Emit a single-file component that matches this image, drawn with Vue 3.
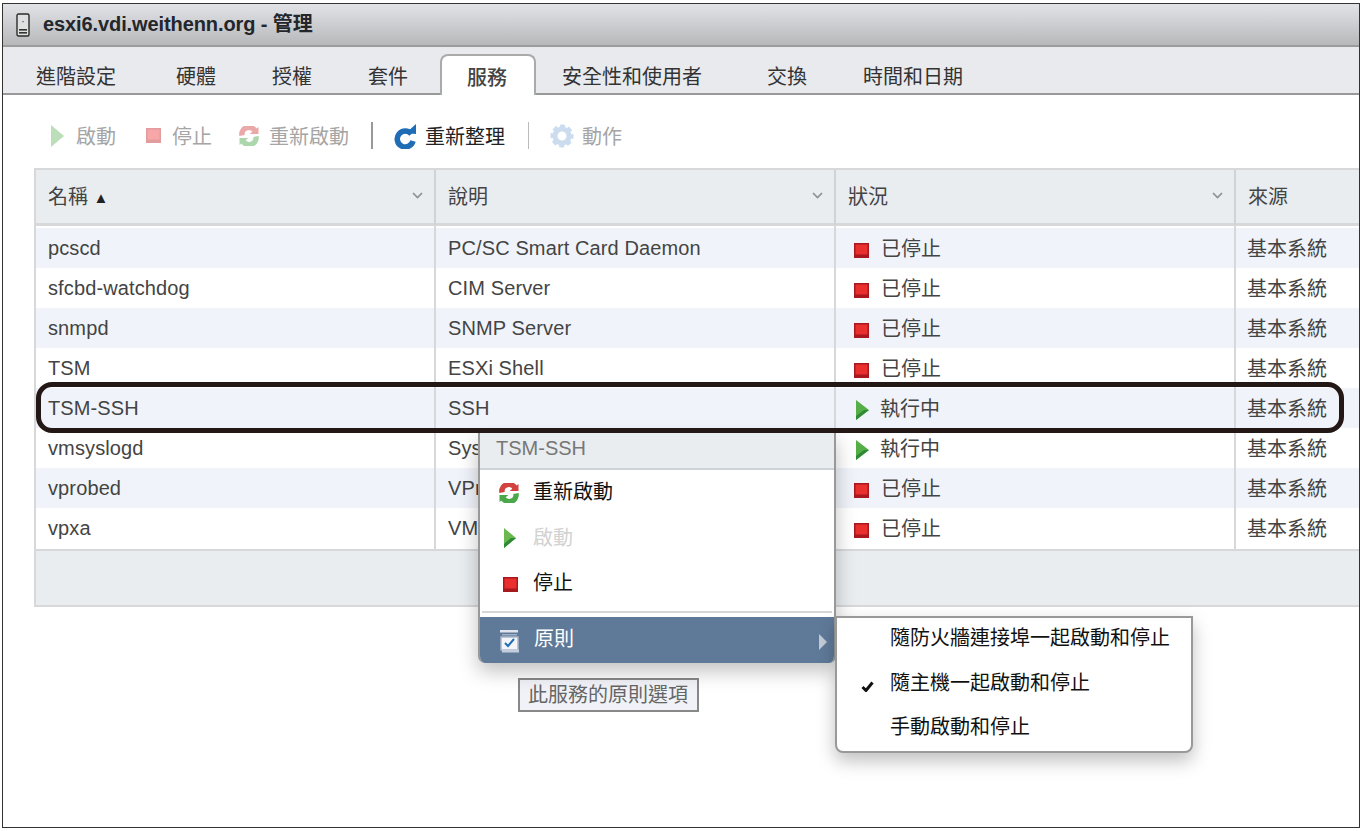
<script setup>
const tabs = [
  { t: '進階設定', ml: 33 },
  { t: '硬體', ml: 60 },
  { t: '授權', ml: 56 },
  { t: '套件', ml: 56 },
  { t: '服務', ml: 32, active: true },
  { t: '安全性和使用者', ml: 26 },
  { t: '交換', ml: 65 },
  { t: '時間和日期', ml: 56 }
]
const rows = [
  ['pcscd', 'PC/SC Smart Card Daemon', 'stop', '已停止'],
  ['sfcbd-watchdog', 'CIM Server', 'stop', '已停止'],
  ['snmpd', 'SNMP Server', 'stop', '已停止'],
  ['TSM', 'ESXi Shell', 'stop', '已停止'],
  ['TSM-SSH', 'SSH', 'run', '執行中'],
  ['vmsyslogd', 'Sys', 'run', '執行中'],
  ['vprobed', 'VPr', 'stop', '已停止'],
  ['vpxa', 'VM', 'stop', '已停止']
]
</script>

<template>
  <div class="frame">
    <div class="title">
      <svg class="srv" width="14" height="24" viewBox="0 0 14 24">
        <rect x="1" y="1" width="12" height="22" rx="1.5" fill="#dfe0e0" stroke="#2b2b2b" stroke-width="1.4" />
        <rect x="3" y="16" width="8" height="1.6" fill="#333" />
        <rect x="3" y="19" width="8" height="1.6" fill="#333" />
        <rect x="6.4" y="8" width="1.2" height="1.2" fill="#555" />
      </svg>
      <span>esxi6.vdi.weithenn.org - 管理</span>
    </div>

    <div class="tabs">
      <div
        v-for="tab in tabs"
        :key="tab.t"
        class="tab"
        :class="{ active: tab.active }"
        :style="{ marginLeft: tab.ml + 'px' }"
      >{{ tab.t }}</div>
    </div>

    <div class="toolbar">
      <div class="tool dim play-tool">
        <svg width="13" height="22" viewBox="0 0 13 22"><path d="M0 0 L13 11 L0 22 Z" fill="#6db765" /></svg>
        <span>啟動</span>
      </div>
      <div class="tool dim stop-tool">
        <svg width="15" height="15" viewBox="0 0 15 15"><rect width="15" height="15" fill="#c3252b" /><rect x="1.5" y="1.5" width="12" height="10" fill="#ee3e3e" /></svg>
        <span>停止</span>
      </div>
      <div class="tool dim restart-tool">
        <svg width="20" height="20" viewBox="0 0 20 20" fill="none">
          <path d="M3 9.5 A7 7 0 0 1 16.5 6" stroke="#d2423f" stroke-width="5.5" />
          <path d="M10.5 8 H19.5 V1 Z" fill="#d2423f" />
          <path d="M17 10.5 A7 7 0 0 1 3.5 14" stroke="#4aa84a" stroke-width="5.5" />
          <path d="M9.5 12 H0.5 V19 Z" fill="#4aa84a" />
        </svg>
        <span>重新啟動</span>
      </div>
      <i class="sep first"></i>
      <div class="tool refresh-tool">
        <svg width="23" height="26" viewBox="0 0 23 26" fill="none">
          <path d="M17.5 11 A8 8 0 1 0 19 18" stroke="#1f6db5" stroke-width="5.5" />
          <path d="M12 10 L22 1 V11 Z" fill="#1f6db5" />
        </svg>
        <span>重新整理</span>
      </div>
      <i class="sep second"></i>
      <div class="tool dim gear-tool">
        <svg width="26" height="26" viewBox="0 0 26 26" fill="none">
          <circle cx="13" cy="13" r="9" stroke="#8db2dc" stroke-width="5" stroke-dasharray="4.4 2.67" stroke-dashoffset="2" />
          <circle cx="13" cy="13" r="7" stroke="#8db2dc" stroke-width="5" />
        </svg>
        <span>動作</span>
      </div>
    </div>

    <div class="grid">
      <div class="head">
        <div class="hcell">名稱 <span class="sort">▲</span><svg class="chev" width="11" height="7" viewBox="0 0 11 7" fill="none"><path d="M1 1 L5.5 5.5 L10 1" stroke="#8a8f94" stroke-width="1.6" /></svg></div>
        <div class="hcell">說明<svg class="chev" width="11" height="7" viewBox="0 0 11 7" fill="none"><path d="M1 1 L5.5 5.5 L10 1" stroke="#8a8f94" stroke-width="1.6" /></svg></div>
        <div class="hcell">狀況<svg class="chev" width="11" height="7" viewBox="0 0 11 7" fill="none"><path d="M1 1 L5.5 5.5 L10 1" stroke="#8a8f94" stroke-width="1.6" /></svg></div>
        <div class="hcell last">來源</div>
      </div>
      <div class="body">
        <div v-for="(r, i) in rows" :key="r[0]" class="row" :class="{ odd: i % 2 === 0 }">
          <div class="cell">{{ r[0] }}</div>
          <div class="cell">{{ r[1] }}</div>
          <div class="cell status">
            <svg v-if="r[2] === 'stop'" width="15" height="15" viewBox="0 0 15 15"><rect width="15" height="15" fill="#a8181f" /><rect x="1.5" y="1.5" width="12" height="10" fill="#ea2f2f" /></svg>
            <svg v-else class="runi" width="13" height="20" viewBox="0 0 13 20"><path d="M0 0 L13 10 L0 20 Z" fill="#55ae46" /><path d="M0 20 L13 10 L8 10 L0 16 Z" fill="#2f8a35" /></svg>
            <span>{{ r[3] }}</span>
          </div>
          <div class="cell last">基本系統</div>
        </div>
      </div>
      <div class="foot"></div>
    </div>

    <div class="ring"></div>

    <div class="menu">
      <div class="mhead">TSM-SSH</div>
      <div class="mitem m-restart">
        <svg class="mi" width="20" height="20" viewBox="0 0 20 20" fill="none">
          <path d="M3 9.5 A7 7 0 0 1 16.5 6" stroke="#d2423f" stroke-width="5.5" />
          <path d="M10.5 8 H19.5 V1 Z" fill="#d2423f" />
          <path d="M17 10.5 A7 7 0 0 1 3.5 14" stroke="#4aa84a" stroke-width="5.5" />
          <path d="M9.5 12 H0.5 V19 Z" fill="#4aa84a" />
        </svg>
        <span>重新啟動</span>
      </div>
      <div class="mitem m-start">
        <svg class="mi" width="20" height="20" viewBox="0 0 20 20"><path d="M5 0 L17 10 L5 20 Z" fill="#6ab84f" /><path d="M5 20 L17 10 L12 10 L5 16 Z" fill="#2f8a35" /></svg>
        <span>啟動</span>
      </div>
      <div class="mitem m-stop">
        <svg class="mi" width="20" height="15" viewBox="0 0 20 15"><rect x="4" width="15" height="15" fill="#a8181f" /><rect x="5.5" y="1.5" width="12" height="10" fill="#ea2f2f" /></svg>
        <span>停止</span>
      </div>
      <div class="msep"></div>
      <div class="mitem selected">
        <svg class="mi" width="21" height="24" viewBox="0 0 21 24" fill="none">
          <rect x="2" y="8" width="17" height="13" fill="#f3f5f9" stroke="#a9b6cc" stroke-width="1.5" />
          <rect x="1" y="1" width="18" height="2.5" fill="#dfe4ee" />
          <rect x="3" y="5" width="15" height="1.5" fill="#9fb0c6" />
          <rect x="3" y="20.5" width="17" height="3" fill="#c3cddd" />
          <path d="M6 14 L9 17 L15 10" stroke="#1f6db5" stroke-width="2" />
        </svg>
        <span>原則</span>
        <svg class="arrow" width="8" height="16" viewBox="0 0 8 16"><path d="M0 0 L8 8 L0 16 Z" fill="#c3ccd6" /></svg>
      </div>
    </div>

    <div class="sub">
      <div class="sitem">隨防火牆連接埠一起啟動和停止</div>
      <div class="sitem">
        <svg class="check" width="13" height="11" viewBox="0 0 13 11" fill="none"><path d="M1.5 6 L5 9.5 L11.5 1.5" stroke="#111" stroke-width="3" /></svg>
        隨主機一起啟動和停止
      </div>
      <div class="sitem">手動啟動和停止</div>
    </div>

    <div class="tip">此服務的原則選項</div>
  </div>
</template>

<style>
html, body { background: #fff; }
</style>

<style scoped>
.frame {
  position: relative;
  box-sizing: border-box;
  width: 1358px;
  height: 825px;
  margin: 3px 3px 0 2px;
  border: 1px solid #333;
  overflow: hidden;
  background: #fff;
  font-family: "Liberation Sans", "Noto Sans CJK TC", sans-serif;
  font-size: 20px;
  color: #333;
}
.title {
  box-sizing: border-box;
  height: 43px;
  padding: 0 0 5px 13px;
  display: flex;
  align-items: center;
  gap: 13px;
  background: linear-gradient(#e1e3e7, #b6b8ba);
  border-bottom: 2px solid #9a9c9e;
  color: #23262b;
  font-weight: 700;
  font-size: 20px;
  letter-spacing: -.1px;
}
.srv { flex: none; margin-top: 5px; }
.tabs {
  box-sizing: border-box;
  height: 48px;
  display: flex;
  align-items: flex-end;
  background: #e8eaee;
  border-bottom: 2px solid #999;
}
.tab {
  height: 38px;
  line-height: 44px;
  color: #333;
  white-space: nowrap;
}
.tab.active {
  box-sizing: border-box;
  height: 41px;
  line-height: 44px;
  padding: 0 27px 0 25px;
  margin-bottom: -2px;
  background: #fff;
  border: 2px solid #aaa;
  border-bottom: 0;
  border-radius: 8px 8px 0 0;
  color: #444;
  font-weight: 500;
}
.toolbar {
  height: 73px;
  display: flex;
  align-items: center;
  padding-left: 48px;
  padding-top: 8px;
  box-sizing: border-box;
}
.tool {
  display: flex;
  align-items: center;
  color: #222;
  white-space: nowrap;
}
.tool.dim { color: #a5a5a5; }
.tool.dim svg { opacity: .45; }
.play-tool { gap: 12px; }
.stop-tool { gap: 11px; margin-left: 30px; }
.restart-tool { gap: 10px; margin-left: 27px; }
.refresh-tool { gap: 8px; margin-left: 21px; }
.gear-tool { gap: 7px; margin-left: 20px; }
.sep { flex: none; width: 2px; height: 27px; background: #999; }
.sep.first { margin-left: 22px; }
.sep.second { width: 1px; margin-left: 23px; background: #bbb; }
.grid {
  box-sizing: border-box;
  width: 1330px;
  height: 439px;
  margin-left: 31px;
  border: 2px solid #d6d8da;
  border-right: 0;
  display: flex;
  flex-direction: column;
}
.head {
  box-sizing: border-box;
  height: 56px;
  flex: none;
  display: grid;
  grid-template-columns: 400px 400px 400px 1fr;
  background: #e9edf0;
  border-bottom: 3px solid #d6d8da;
}
.hcell {
  position: relative;
  box-sizing: border-box;
  padding-left: 12px;
  line-height: 54px;
  border-right: 2px solid #d0d3d6;
  color: #444;
}
.sort { font-size: 15px; color: #222; vertical-align: 1px; }
.chev { position: absolute; right: 11px; top: 22px; }
.last { border-right: 0; }
.body {
  flex: none;
  padding-top: 2px;
  background-color: #fff;
  background-image:
    linear-gradient(#d6d8da, #d6d8da),
    linear-gradient(#d6d8da, #d6d8da),
    linear-gradient(#d6d8da, #d6d8da);
  background-size: 2px 2px;
  background-position: 398px 0, 798px 0, 1198px 0;
  background-repeat: no-repeat;
}
.row {
  height: 40px;
  display: grid;
  grid-template-columns: 400px 400px 400px 1fr;
  letter-spacing: .12px;
}
.row.odd { background: #f0f4fa; }
.cell {
  box-sizing: border-box;
  padding-left: 12px;
  line-height: 40px;
  border-right: 2px solid #d6d8da;
  color: #444;
  white-space: nowrap;
}
.cell.last { border-right: 0; letter-spacing: 0; padding-left: 11px; line-height: 42px; }
.status { display: flex; align-items: center; gap: 12px; padding-left: 18px; padding-top: 2px; letter-spacing: 0; }
.status span { margin-top: -2px; }
.runi { margin-left: 2px; margin-right: -1px; }
.foot {
  flex: 1;
  margin-top: 1px;
  background: #e9edf0;
  border-top: 2px solid #d6d8da;
}
.ring {
  position: absolute;
  left: 33px;
  top: 378px;
  width: 1308px;
  height: 51px;
  box-sizing: border-box;
  border: 5px solid #231815;
  border-radius: 16px;
  z-index: 5;
}
.menu {
  position: absolute;
  left: 475px;
  top: 429px;
  width: 358px;
  height: 230px;
  box-sizing: border-box;
  background: #fff;
  border: 2px solid #999;
  border-top: 0;
  border-bottom: 0;
  border-radius: 0 0 7px 7px;
  box-shadow: 0 8px 20px rgba(0, 0, 0, .25);
  overflow: hidden;
  z-index: 3;
}
.mhead {
  box-sizing: border-box;
  height: 37px;
  padding-left: 16px;
  line-height: 30px;
  background: #e9edf0;
  border-bottom: 2px solid #cdd2d6;
  color: #777;
}
.mitem {
  box-sizing: border-box;
  display: flex;
  align-items: center;
  padding-left: 19px;
  color: #111;
}
.mi { flex: none; margin-right: 14px; }
.m-restart { height: 41px; }
.m-restart .mi { margin-top: 5px; }
.m-start { height: 51px; color: #d2d2d2; }
.m-start .mi { margin-top: 3px; }
.m-stop { height: 39px; }
.m-stop .mi { margin-top: 6px; }
.msep { height: 2px; margin: 10px 2px 4px 2px; background: #d6d6d6; }
.mitem.selected {
  position: relative;
  height: 46px;
  padding-bottom: 6px;
  background: #5f7a99;
  color: #fff;
}
.selected .mi { margin-top: 7px; }
.arrow { position: absolute; right: 7px; top: 17px; }
.sub {
  position: absolute;
  left: 832px;
  top: 612px;
  width: 358px;
  height: 137px;
  box-sizing: border-box;
  background: #fff;
  border: 2px solid #999;
  border-radius: 0 0 8px 8px;
  box-shadow: 0 8px 18px rgba(0, 0, 0, .25);
  z-index: 4;
}
.sitem {
  position: relative;
  height: 44.5px;
  line-height: 40px;
  padding-left: 53px;
  color: #111;
}
.check { position: absolute; left: 24px; top: 18px; }
.tip {
  position: absolute;
  left: 515px;
  top: 674px;
  box-sizing: border-box;
  height: 34px;
  padding: 0 9px 0 8px;
  line-height: 30px;
  background: #f0f2f8;
  border: 2px solid #888;
  color: #666;
  white-space: nowrap;
  z-index: 2;
}
</style>
